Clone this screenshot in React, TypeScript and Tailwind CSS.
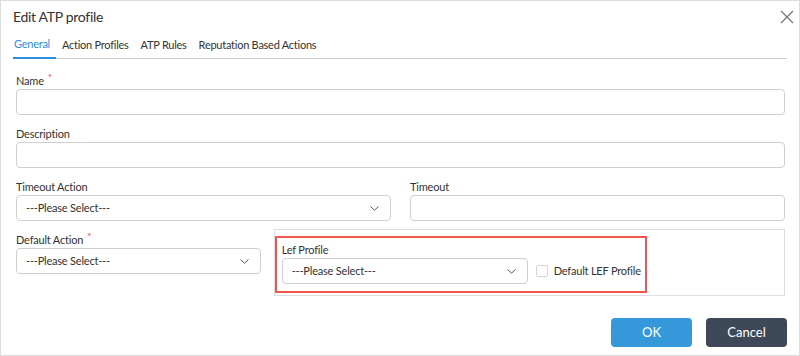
import React from 'react';

const Chevron = () => (
  <svg width="9" height="5" viewBox="0 0 9 5" fill="none" className="shrink-0">
    <path d="M0.8 0.8l3.7 3.4 3.7-3.4" stroke="#555" strokeWidth="1" strokeLinecap="round" strokeLinejoin="round" />
  </svg>
);

const Label = ({ text, required }: { text: string; required?: boolean }) => (
  <div className="h-[18px] flex items-center text-[11px] tracking-[-0.2px] text-[#333] leading-none">
    {text}
    {required && <span className="text-[#e0474c] ml-[4px] text-[10px] -mt-[6px]">*</span>}
  </div>
);

const Input = () => <div className="h-[26px] border border-[#cfcfcf] rounded-[4px] bg-white" />;

const Select = ({ className = '' }: { className?: string }) => (
  <div
    className={`h-[26px] border border-[#cfcfcf] rounded-[4px] bg-white flex items-center justify-between pl-[9px] pr-[11px] text-[11px] tracking-[-0.2px] text-[#333] ${className}`}
  >
    <span>---Please Select---</span>
    <Chevron />
  </div>
);

export default function App() {
  const tabs = ['General', 'Action Profiles', 'ATP Rules', 'Reputation Based Actions'];

  return (
    <div
      className="w-[800px] h-[356px] bg-white border border-[#dcdcdc] flex flex-col text-[#333]"
      style={{ fontFamily: 'Lato, "Open Sans", sans-serif' }}
    >
      {/* Header */}
      <div className="flex items-start justify-between pl-[12px] pr-[5px] pt-[6px]">
        <h1 className="text-[14px] tracking-[-0.3px] leading-[20px] text-[#333]">Edit ATP profile</h1>
        <svg width="14" height="14" viewBox="0 0 14 14" className="mt-[3px]">
          <path d="M1 1l12 12M13 1L1 13" stroke="#777" strokeWidth="1.3" />
        </svg>
      </div>

      {/* Tabs */}
      <div className="mx-[12px] mt-[5px] flex border-b border-[#cccccc] h-[27px] text-[11px] tracking-[-0.25px]">
        {tabs.map((t, i) => (
          <div
            key={t}
            className={`flex items-center ${i === 0 ? 'text-[#2a8fde] border-b-2 border-[#2a8fde] -mb-[1px] pl-[1px] pr-[6px]' : 'pl-[6px] pr-[6px] text-[#333]'}`}
          >
            {t}
          </div>
        ))}
      </div>

      {/* Form */}
      <div className="pl-[15px] pr-[14px] pt-[12px] flex flex-col">
        <Label text="Name" required />
        <Input />

        <div className="mt-[9px]">
          <Label text="Description" />
          <Input />
        </div>

        <div className="mt-[9px] flex gap-[19px]">
          <div className="flex-1">
            <Label text="Timeout Action" />
            <Select />
          </div>
          <div className="flex-1">
            <Label text="Timeout" />
            <Input />
          </div>
        </div>

        <div className="mt-[9px] flex items-start">
          <div className="w-[246px]">
            <Label text="Default Action" required />
            <Select />
          </div>
          <div className="ml-[13px] w-[514px] h-[67px] -mt-[1px] border border-[#dedede] pt-[6px]">
            <div className="w-[372px] h-[57px] border-2 border-[#f0564d] pl-[5px] pt-[2px] flex flex-col">
              <Label text="Lef Profile" />
              <div className="flex items-center">
                <Select className="w-[246px]" />
                <div className="ml-[8px] w-[12px] h-[12px] border border-[#d5d5d5] rounded-[2px] bg-white" />
                <span className="ml-[6px] text-[11px] tracking-[-0.2px] text-[#333] whitespace-nowrap">Default LEF Profile</span>
              </div>
            </div>
          </div>
        </div>
      </div>

      {/* Footer */}
      <div className="mt-auto mb-[8px] flex justify-end gap-[14px] pr-[12px]">
        <button className="w-[81px] h-[29px] rounded-[4px] bg-[#3498db] text-white text-[13px]">OK</button>
        <button className="w-[81px] h-[29px] rounded-[4px] bg-[#3d4858] text-white text-[13px]">Cancel</button>
      </div>
    </div>
  );
}
